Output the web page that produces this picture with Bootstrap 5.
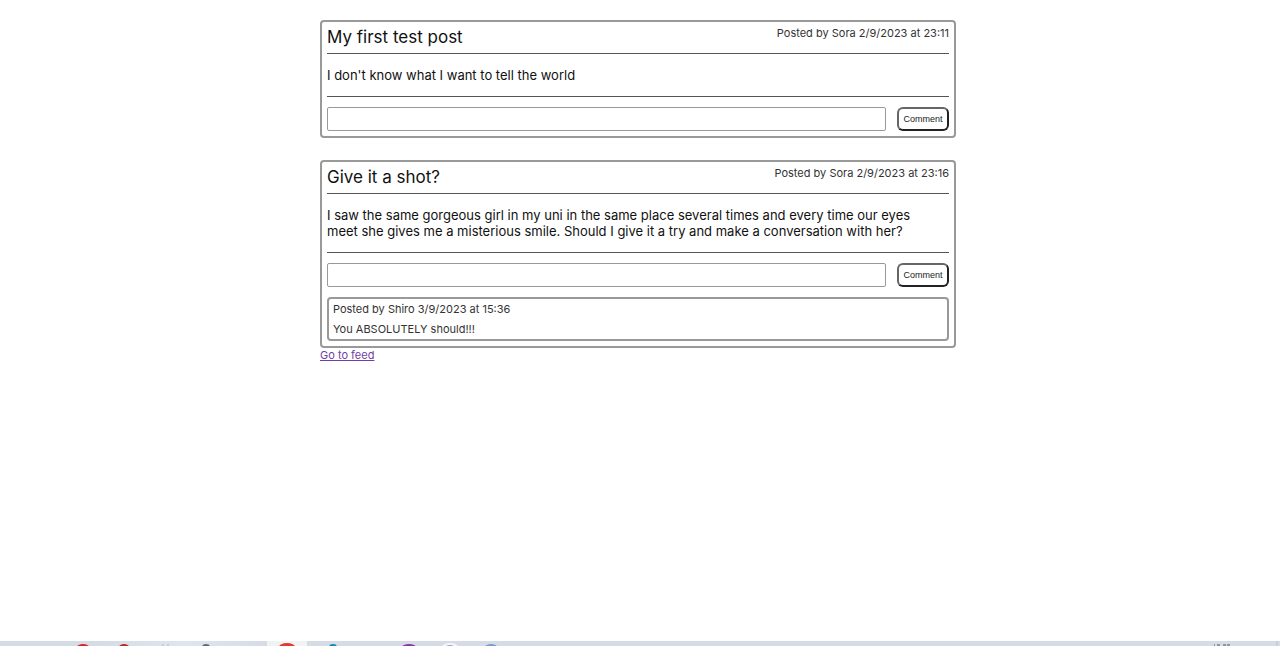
<!DOCTYPE html>
<html lang="en">
<head>
<meta charset="utf-8">
<meta name="viewport" content="width=device-width, initial-scale=1">
<title>Feed</title>
<link href="https://cdn.jsdelivr.net/npm/bootstrap@5.3.0/dist/css/bootstrap.min.css" rel="stylesheet">
<style>
  body { font-family: Inter, "Liberation Sans", sans-serif; font-size: 11px; line-height: 14px; color: #333; background: #fff; }
  .post, .reply { border: 2px solid #999; border-radius: 4px; }
  .post { padding: 5px; margin-bottom: 22px; }
  .post-head { height: 27px; border-bottom: 1px solid #555; }
  .post-head span { line-height: 12px; }
  .post-title { font-size: 17px; line-height: 20px; font-weight: 400; color: #111; }
  .post-text { font-size: 13px; line-height: 16px; color: #111; padding: 13px 24px 13px 0; border-bottom: 1px solid #555; }
  .comment-form { gap: 11px; margin-top: 10px; }
  .comment-input { height: 24px; border: 1px solid #999; border-radius: 2px; min-width: 0; }
  .comment-btn { width: 52px; height: 24px; padding: 0; font-family: "Liberation Sans", sans-serif; font-size: 9px; line-height: 12px; color: #222; background: #fff; border: 2px solid; border-color: #666 #222 #222 #666; border-radius: 6px; }
  .reply { margin-top: 10px; padding: 3px 4px; }
  .reply p { margin: 0; line-height: 14px; }
  .reply p + p { margin-top: 6px; }
  .feed-link { color: #6f3fa5; }
  .taskbar { height: 5px; background: #d5dce5; }
</style>
</head>
<body>
<main class="container-fluid p-0">
  <div class="row g-0">
    <div class="col-6 offset-3 pe-1 pt-3">
      <div class="pt-1">
        <article class="post">
          <header class="post-head d-flex justify-content-between align-items-start">
            <h2 class="post-title m-0">My first test post</h2>
            <span>Posted by Sora 2/9/2023 at 23:11</span>
          </header>
          <p class="post-text m-0">I don't know what I want to tell the world</p>
          <form class="comment-form d-flex">
            <input class="comment-input flex-grow-1" type="text" aria-label="Comment on My first test post">
            <button class="comment-btn" type="button">Comment</button>
          </form>
        </article>
        <article class="post mb-0">
          <header class="post-head d-flex justify-content-between align-items-start">
            <h2 class="post-title m-0">Give it a shot?</h2>
            <span>Posted by Sora 2/9/2023 at 23:16</span>
          </header>
          <p class="post-text m-0">I saw the same gorgeous girl in my uni in the same place several times and every time our eyes meet she gives me a misterious smile. Should I give it a try and make a conversation with her?</p>
          <form class="comment-form d-flex">
            <input class="comment-input flex-grow-1" type="text" aria-label="Comment on Give it a shot?">
            <button class="comment-btn" type="button">Comment</button>
          </form>
          <div class="reply">
            <p>Posted by Shiro 3/9/2023 at 15:36</p>
            <p>You ABSOLUTELY should!!!</p>
          </div>
        </article>
        <a class="feed-link" href="#">Go to feed</a>
      </div>
    </div>
  </div>
</main>
<footer class="taskbar fixed-bottom overflow-hidden d-flex justify-content-between" aria-hidden="true">
  <svg width="540" height="5" viewBox="0 0 540 5">
    <defs><linearGradient id="sheen"><stop offset="0" stop-color="#d5dce5"/><stop offset=".5" stop-color="#dde6f0"/><stop offset="1" stop-color="#d5dce5"/></linearGradient></defs>
    <rect x="100" width="167" height="5" fill="url(#sheen)"/>
    <rect x="267" width="40" height="5" fill="#f0f2f4"/>
    <ellipse cx="83" cy="6" rx="6" ry="3" fill="#d8232f"/>
    <ellipse cx="124" cy="6" rx="5" ry="3" fill="#b8292f"/>
    <path d="M162 4h2m3 0h2" stroke="#aabac9"/>
    <ellipse cx="206" cy="6" rx="4" ry="3" fill="#626970"/>
    <ellipse cx="287" cy="6" rx="8" ry="4" fill="#e23a32"/>
    <ellipse cx="333" cy="6" rx="4" ry="3" fill="#1686b8"/>
    <ellipse cx="409" cy="6" rx="7" ry="3" fill="#8738a0"/>
    <ellipse cx="450" cy="6" rx="8" ry="4" fill="#f4f4fa"/>
    <ellipse cx="450" cy="6" rx="4" ry="2" fill="#a5a2cf"/>
    <ellipse cx="491" cy="6" rx="6" ry="3" fill="#719ed0"/>
  </svg>
  <svg width="80" height="5" viewBox="0 0 80 5">
    <path d="M14 4h1m2 0h3m3 0h3m1 0h3" stroke="#4c535c"/>
    <path d="M77 0v5" stroke="#b9c2cc"/>
  </svg>
</footer>
<script src="https://cdn.jsdelivr.net/npm/bootstrap@5.3.0/dist/js/bootstrap.bundle.min.js"></script>
</body>
</html>
